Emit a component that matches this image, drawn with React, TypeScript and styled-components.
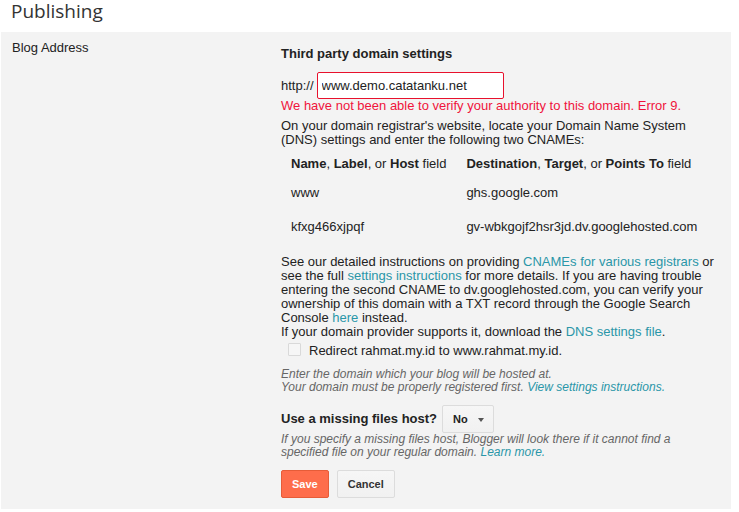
import React, { useState } from 'react';
import styled, { createGlobalStyle } from 'styled-components';

const GlobalStyle = createGlobalStyle`
  body {
    margin: 0;
    background: #fff;
    font-family: "Liberation Sans", Arial, sans-serif;
    color: #222;
  }
`;

const Page = styled.div`
  width: 739px;
`;

const Title = styled.h1`
  margin: 0;
  height: 32px;
  padding: 1px 0 0 11px;
  box-sizing: border-box;
  font-family: "Open Sans", "Noto Sans", sans-serif;
  font-weight: 400;
  font-size: 19px;
  line-height: 20px;
  color: #333;
`;

const Panel = styled.div`
  display: flex;
  margin: 0 8px 0 1px;
  background: #f3f3f3;
`;

const LabelCell = styled.div`
  width: 280px;
  flex: none;
  box-sizing: border-box;
  padding: 8px 11px;
  font-size: 13px;
  line-height: 15px;
`;

const Content = styled.div`
  flex: 1;
  padding: 14px 12px 11px 0;
  font-size: 13px;
  line-height: 14px;
`;

const Heading = styled.div`
  font-weight: bold;
  line-height: 15px;
`;

const UrlRow = styled.div`
  display: flex;
  align-items: center;
  gap: 3px;
  margin-top: 11px;
`;

const UrlInput = styled.input<{ $invalid?: boolean }>`
  width: 187px;
  height: 27px;
  box-sizing: border-box;
  padding: 0 4px;
  border: 1px solid ${(p) => (p.$invalid ? '#e8112d' : '#ccc')};
  border-radius: 2px;
  background: #fff;
  font-family: "Liberation Sans", Arial, sans-serif;
  font-size: 13px;
  color: #222;
  outline: none;
`;

const ErrorText = styled.div`
  color: #f0143c;
`;

const Para = styled.div<{ $gap?: number }>`
  margin-top: ${(p) => p.$gap ?? 0}px;
`;

const Link = styled.a`
  color: #2a96a8;
  text-decoration: none;
  cursor: pointer;
`;

const DnsTable = styled.table`
  border-collapse: collapse;
  font-size: 13px;
  line-height: 14px;
`;

const HeadCell = styled.th`
  padding: 10px 10px 5px;
  text-align: left;
  font-weight: normal;
  b {
    font-weight: bold;
  }
`;

const Cell = styled.td`
  padding: 10px;
`;

const CheckRow = styled.label`
  display: flex;
  align-items: flex-start;
  gap: 8px;
  margin-top: 4px;
  padding-left: 7px;
  cursor: pointer;
`;

const Check = styled.input`
  appearance: none;
  margin: 0;
  width: 13px;
  height: 13px;
  flex: none;
  border: 1px solid #d9d9d9;
  border-radius: 1px;
  background: #f6f6f6;
  &:checked {
    background: #fff;
    border-color: #999;
  }
`;

const CheckLabel = styled.span`
  margin-top: 1px;
`;

const Hint = styled.div<{ $gap?: number }>`
  margin-top: ${(p) => p.$gap ?? 0}px;
  font-size: 12px;
  line-height: 13px;
  font-style: italic;
  color: #666;
`;

const HostRow = styled.div`
  display: flex;
  align-items: center;
  gap: 5px;
  margin-top: 11px;
  font-weight: bold;
`;

const SelectButton = styled.button`
  display: flex;
  align-items: center;
  gap: 10px;
  height: 28px;
  width: 52px;
  padding: 0 0 0 10px;
  border: 1px solid #dcdcdc;
  border-radius: 2px;
  background: linear-gradient(#f6f6f6, #f1f1f1);
  font-family: "Liberation Sans", Arial, sans-serif;
  font-size: 11px;
  font-weight: bold;
  color: #222;
`;

const Caret = styled.span`
  width: 0;
  height: 0;
  border-left: 3.5px solid transparent;
  border-right: 3.5px solid transparent;
  border-top: 4px solid #555;
  margin-top: 2px;
`;

const Actions = styled.div`
  display: flex;
  gap: 8px;
  margin-top: 11px;
`;

const Button = styled.button<{ $primary?: boolean }>`
  height: 28px;
  padding: 0 10px;
  border-radius: 2px;
  border: 1px solid ${(p) => (p.$primary ? '#e65c38' : '#dcdcdc')};
  background: ${(p) => (p.$primary ? '#fe6d4b' : 'linear-gradient(#f6f6f6, #f1f1f1)')};
  color: ${(p) => (p.$primary ? '#fff' : '#333')};
  font-family: "Liberation Sans", Arial, sans-serif;
  font-size: 11px;
  font-weight: bold;
  cursor: pointer;
`;

const records = [
  { name: 'www', target: 'ghs.google.com' },
  { name: 'kfxg466xjpqf', target: 'gv-wbkgojf2hsr3jd.dv.googlehosted.com' },
];

export default function App() {
  const [domain, setDomain] = useState('www.demo.catatanku.net');
  const [redirect, setRedirect] = useState(false);

  return (
    <Page>
      <GlobalStyle />
      <Title>Publishing</Title>
      <Panel>
        <LabelCell>Blog Address</LabelCell>
        <Content>
          <Heading>Third party domain settings</Heading>
          <UrlRow>
            <span>http://</span>
            <UrlInput $invalid value={domain} onChange={(e) => setDomain(e.target.value)} />
          </UrlRow>
          <ErrorText>We have not been able to verify your authority to this domain. Error 9.</ErrorText>
          <Para $gap={6}>
            On your domain registrar's website, locate your Domain Name System (DNS) settings and enter the
            following two CNAMEs:
          </Para>
          <DnsTable>
            <thead>
              <tr>
                <HeadCell>
                  <b>Name</b>, <b>Label</b>, or <b>Host</b> field
                </HeadCell>
                <HeadCell>
                  <b>Destination</b>, <b>Target</b>, or <b>Points To</b> field
                </HeadCell>
              </tr>
            </thead>
            <tbody>
              {records.map((r) => (
                <tr key={r.name}>
                  <Cell>{r.name}</Cell>
                  <Cell>{r.target}</Cell>
                </tr>
              ))}
            </tbody>
          </DnsTable>
          <Para $gap={11}>
            See our detailed instructions on providing <Link>CNAMEs for various registrars</Link> or see the full{' '}
            <Link>settings instructions</Link> for more details. If you are having trouble entering the second CNAME
            to dv.googlehosted.com, you can verify your ownership of this domain with a TXT record through the Google
            Search Console <Link>here</Link> instead.
          </Para>
          <Para>
            If your domain provider supports it, download the <Link>DNS settings file</Link>.
          </Para>
          <CheckRow>
            <Check type="checkbox" checked={redirect} onChange={(e) => setRedirect(e.target.checked)} />
            <CheckLabel>Redirect rahmat.my.id to www.rahmat.my.id.</CheckLabel>
          </CheckRow>
          <Hint $gap={10}>
            Enter the domain which your blog will be hosted at.
            <br />
            Your domain must be properly registered first. <Link>View settings instructions.</Link>
          </Hint>
          <HostRow>
            <span>Use a missing files host?</span>
            <SelectButton>
              No
              <Caret />
            </SelectButton>
          </HostRow>
          <Hint>
            If you specify a missing files host, Blogger will look there if it cannot find a specified file on your
            regular domain. <Link>Learn more.</Link>
          </Hint>
          <Actions>
            <Button $primary>Save</Button>
            <Button>Cancel</Button>
          </Actions>
        </Content>
      </Panel>
    </Page>
  );
}
